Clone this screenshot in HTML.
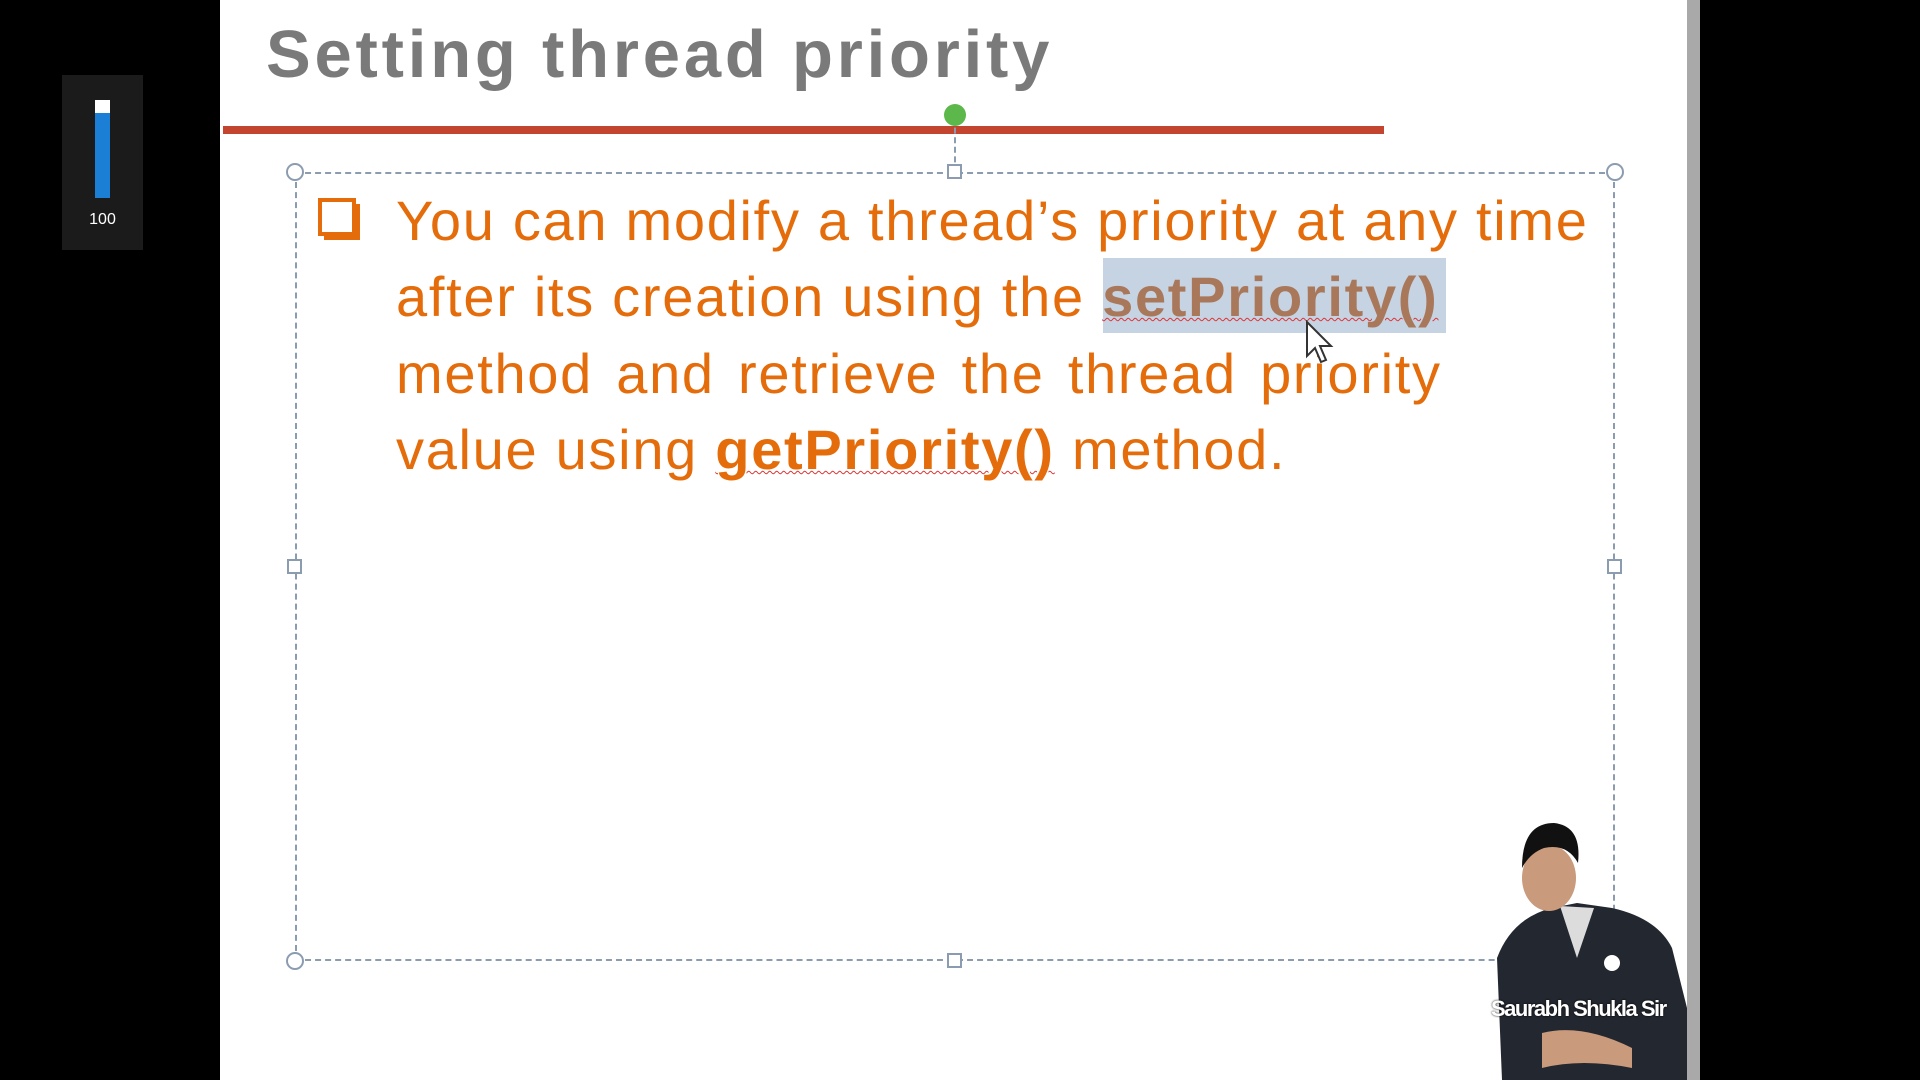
<!DOCTYPE html>
<html><head><meta charset="utf-8"><style>
html,body{margin:0;padding:0;background:#000;width:1920px;height:1080px;overflow:hidden;position:relative;font-family:"Liberation Sans",sans-serif}
.abs{position:absolute}
.vol{left:62px;top:75px;width:81px;height:175px;background:#1b1b1b}
.slide{left:220px;top:0;width:1480px;height:1080px;background:#fff}
.edge{left:1687px;top:0;width:13px;height:1080px;background:#a9a9a9}
.title{left:266px;top:16px;font-size:67px;font-weight:bold;color:#7a7a7a;white-space:nowrap;letter-spacing:3.8px}
.red{left:223px;top:126px;width:1161px;height:8px;background:#c4452f}
.box{left:295px;top:172px;width:1320px;height:789px;border:2px dashed #8c9cb0;box-sizing:border-box}
.hc{width:18px;height:18px;border:2px solid #8c9cb0;border-radius:50%;background:#fff;box-sizing:border-box}
.hs{width:15px;height:15px;border:2px solid #8c9cb0;background:#fff;box-sizing:border-box}
.line{left:396px;font-size:56px;color:#e46c0a;white-space:nowrap;letter-spacing:1.7px;word-spacing:0}
.hl{left:1103px;top:258px;width:343px;height:75px;background:#c5d3e3}
</style></head><body>
<div class="abs vol"></div>
<div class="abs" style="left:95px;top:100px;width:15px;height:98px;background:#1b7fd6"></div>
<div class="abs" style="left:95px;top:100px;width:15px;height:13px;background:#fff"></div>
<div class="abs" style="left:62px;top:211px;width:81px;text-align:center;color:#fff;font-size:16px">100</div>
<div class="abs slide"></div>
<div class="abs edge"></div>
<div class="abs title">Setting thread priority</div>
<div class="abs red"></div>
<div class="abs box"></div>
<div class="abs" style="left:954px;top:118px;height:54px;border-left:2px dashed #8c9cb0"></div>
<div class="abs" style="left:944px;top:104px;width:22px;height:22px;border-radius:50%;background:#5cb84a"></div>
<div class="abs hc" style="left:286px;top:163px"></div>
<div class="abs hc" style="left:1606px;top:163px"></div>
<div class="abs hc" style="left:286px;top:952px"></div>
<div class="abs hc" style="left:1606px;top:952px"></div>
<div class="abs hs" style="left:947px;top:164px"></div>
<div class="abs hs" style="left:947px;top:953px"></div>
<div class="abs hs" style="left:287px;top:559px"></div>
<div class="abs hs" style="left:1607px;top:559px"></div>
<div class="abs hl"></div>
<div class="abs" style="left:318px;top:198px;width:38px;height:38px;border:4px solid #e46c0a;box-sizing:border-box;box-shadow:5px 5px 0 -1px #e46c0a"></div>
<div class="abs line" style="top:188px">You can modify a thread’s priority at any time</div>
<div class="abs line" style="top:264px">after its creation using the <b style="color:#a9785a;text-decoration:underline wavy #d33;text-decoration-thickness:1px">setPriority()</b></div>
<div class="abs line" style="top:341px;word-spacing:6px">method and retrieve the thread priority</div>
<div class="abs line" style="top:417px">value using <b style="text-decoration:underline wavy #d33;text-decoration-thickness:1px">getPriority()</b> method.</div>
<svg class="abs" style="left:1305px;top:320px" width="32" height="48" viewBox="0 0 32 48"><path d="M2 2 L2 36 L10 28 L16 42 L21 40 L15 26 L26 26 Z" fill="#fff" stroke="#333" stroke-width="2"/></svg>
<svg class="abs" style="left:1482px;top:808px" width="205" height="272" viewBox="0 0 205 272">
<path d="M20 272 L15 150 Q30 110 70 100 L95 95 L130 100 Q175 110 190 140 L205 200 L205 272 Z" fill="#23272f"/>
<path d="M78 98 L95 150 L112 100 Z" fill="#dcdcdc"/>
<ellipse cx="67" cy="70" rx="27" ry="33" fill="#c99a7c"/>
<path d="M40 60 Q40 15 72 15 Q100 18 96 55 Q85 35 62 40 Q48 45 40 60Z" fill="#111"/>
<path d="M60 225 Q100 215 150 240 L150 260 Q100 250 60 260Z" fill="#c99a7c"/>
<circle cx="130" cy="155" r="8" fill="#fff"/>
</svg>
<div class="abs" style="left:1491px;top:996px;color:#fff;font-size:22px;font-weight:bold;letter-spacing:-1.5px;text-shadow:0 0 2px #000">Saurabh Shukla Sir</div>
</body></html>
